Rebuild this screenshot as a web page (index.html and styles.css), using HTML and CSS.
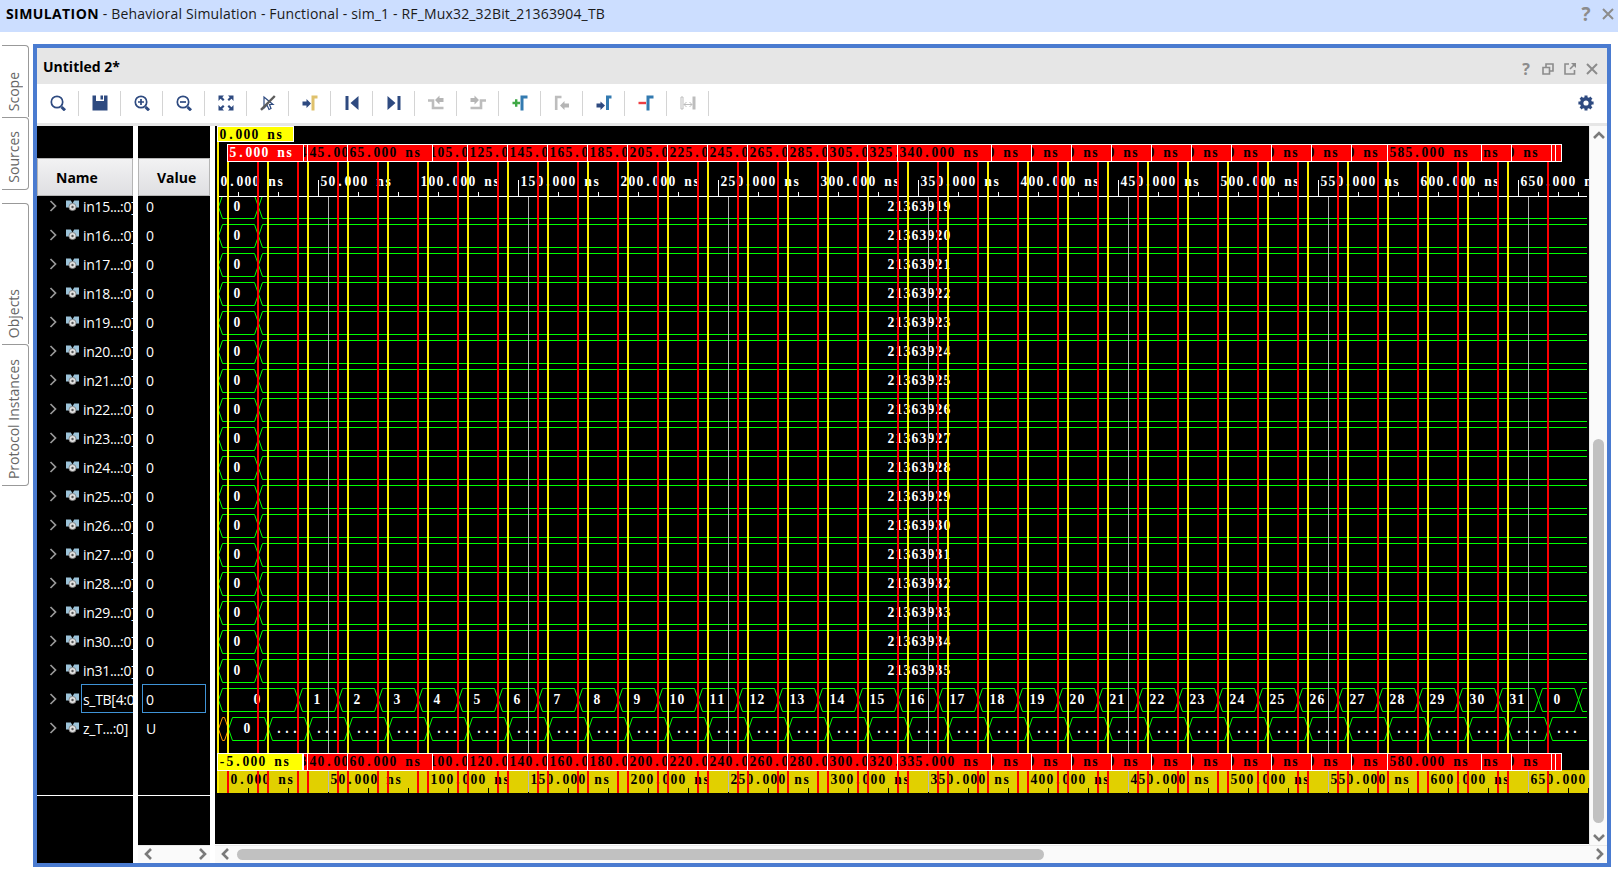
FILE: index.html
```html
<!DOCTYPE html>
<html lang="en">
<head>
<meta charset="utf-8">
<title>Behavioral Simulation</title>
<link rel="stylesheet" href="styles.css">
</head>
<body>
<header class="sim-bar">
  <div class="sim-title"><b>SIMULATION</b><span> - Behavioral Simulation - Functional - sim_1 - RF_Mux32_32Bit_21363904_TB</span></div>
  <div class="sim-actions">
    <span class="help">?</span>
    <svg width="12" height="12" viewBox="0 0 12 12"><path class="cross" d="M1 1L11 11M11 1L1 11"/></svg>
  </div>
</header>
<main class="workspace">
  <nav class="side">
    <div class="tab t1"><span>Scope</span></div>
    <div class="tab t2"><span>Sources</span></div>
    <div class="tab t3"><span>Objects</span></div>
    <div class="tab t4"><span>Protocol Instances</span></div>
  </nav>
  <section class="panel">
    <div class="panel-title">
      <b>Untitled 2*</b>
      <div class="panel-actions">
        <span class="help small">?</span>
        <svg width="12" height="12" viewBox="0 0 12 12"><path class="thin" d="M4 4V1H11V8H8M1 4.500H7.500V11H1Z"/></svg>
        <svg width="12" height="12" viewBox="0 0 12 12"><path class="thin" d="M5 1H1V11H10.500V7M6 6L10 2"/><path fill="#8c8c8c" d="M7 0H12V5Z"/></svg>
        <svg width="12" height="12" viewBox="0 0 12 12"><path class="cross" d="M1 1L11 11M11 1L1 11"/></svg>
      </div>
    </div>
    <div class="toolbar">
      <div class="tool"><svg viewBox="0 0 16 16"><circle class="ln" cx="7" cy="7" r="5.700"/><path class="ln thick" d="M11.500 12L15 15.300"/></svg></div>
      <div class="tool"><svg viewBox="0 0 16 16"><path class="fl" d="M0.500 0.500H4V6H12V0.500H15.500V15.500H0.500ZM8.500 0.500H11V4.500H8.500Z"/></svg></div>
      <div class="tool"><svg viewBox="0 0 16 16"><circle class="ln" cx="7" cy="7" r="5.700"/><path class="ln" d="M4 7H10M7 4V10"/><path class="ln thick" d="M11.500 12L15 15.300"/></svg></div>
      <div class="tool"><svg viewBox="0 0 16 16"><circle class="ln" cx="7" cy="7" r="5.700"/><path class="ln" d="M4 7H10"/><path class="ln thick" d="M11.500 12L15 15.300"/></svg></div>
      <div class="tool"><svg viewBox="0 0 16 16"><path class="fl" d="M0.500 0.500H6L4.300 2.200L6.500 4.500L5 6L2.500 3.800L0.500 6ZM15.500 0.500V6L13.500 3.800L11 6L9.500 4.500L11.700 2.200L10 0.500ZM0.500 15.500V10L2.500 12.200L5 10L6.500 11.500L4.300 13.800L6 15.500ZM15.500 15.500H10L11.700 13.800L9.500 11.500L11 10L13.500 12.200L15.500 10Z"/></svg></div>
      <div class="tool"><svg viewBox="0 0 16 16"><path class="ln fine" d="M4 2V13L7 10L9 14.500L11 13.500L9.500 9.500H13Z"/><path stroke="#5c5c5c" stroke-width="2.400" d="M1 14.800L14.800 1"/></svg></div>
      <div class="tool"><svg viewBox="0 0 16 16"><path class="fl" d="M0.500 6.500H4.500V4L9 8.500L4.500 13V10.500H0.500Z"/><path fill="none" stroke="#dfc16c" stroke-width="3" d="M11 15.500V2H15.500"/></svg></div>
      <div class="tool"><svg viewBox="0 0 16 16"><path class="fl" d="M1.500 1H4.500V15H1.500ZM14.500 1V15L6.500 8Z"/></svg></div>
      <div class="tool"><svg viewBox="0 0 16 16"><path class="fl" d="M11.500 1H14.500V15H11.500ZM1.500 1V15L9.500 8Z"/></svg></div>
      <div class="tool"><svg viewBox="0 0 16 16"><path class="gl" d="M0 5.500H5V13H15.500"/><path class="gf" d="M7 5L11.500 0.500V3H15.500V7H11.500V9.500Z"/></svg></div>
      <div class="tool"><svg viewBox="0 0 16 16"><path class="gl" d="M16 5.500H11V13H0.500"/><path class="gf" d="M9 5L4.500 0.500V3H0.500V7H4.500V9.500Z"/></svg></div>
      <div class="tool"><svg viewBox="0 0 16 16"><path stroke="#3fa845" stroke-width="2.400" d="M0.500 8H8M4.200 4.200V11.800"/><path class="bl" d="M10 15.500V2H15.500"/></svg></div>
      <div class="tool"><svg viewBox="0 0 16 16"><path class="gl" d="M2.200 15V2H7.500"/><path class="gf" d="M6 10.500L10.500 6V8.500H15V12.500H10.500V15Z"/></svg></div>
      <div class="tool"><svg viewBox="0 0 16 16"><path class="fl" d="M0.500 8.500H4.500V6.500L9 10.500L4.500 15V12.500H0.500Z"/><path class="bl" d="M11.500 15V2H15.500"/></svg></div>
      <div class="tool"><svg viewBox="0 0 16 16"><path stroke="#ee3e42" stroke-width="2.400" d="M0.500 8H8"/><path class="bl" d="M10 15.500V2H15.500"/></svg></div>
      <div class="tool"><svg viewBox="0 0 16 16"><path fill="none" stroke="#bdbdbd" d="M1 2H3V14H1ZM4 9.500H12M6.500 7L4 9.500L6.500 12M9.500 7L12 9.500L9.500 12"/><path stroke="#bdbdbd" stroke-width="3" d="M14 1.500V14.500"/></svg></div>
      <div class="gear"><svg viewBox="0 0 16 16"><circle cx="8" cy="8" r="4.300" fill="none" stroke="#2e4a80" stroke-width="3.400"/><path stroke="#2e4a80" stroke-width="3" d="M8 0.400V3M8 13V15.600M0.400 8H3M13 8H15.600M2.600 2.600L4.400 4.400M11.600 11.600L13.400 13.400M2.600 13.400L4.400 11.600M11.600 4.400L13.400 2.600"/></svg></div>
    </div>
    <div class="wave-area">
      <div class="col names">
        <div class="head">Name</div>
        <div class="rows" id="names"></div>
        <div class="tail"></div>
      </div>
      <div class="col values">
        <div class="head">Value</div>
        <div class="rows" id="values"></div>
        <div class="tail"></div>
        <div class="hbar">
          <svg width="8" height="12" viewBox="0 0 8 12"><path class="arr" d="M7 1L2 6L7 11"/></svg>
          <svg width="8" height="12" viewBox="0 0 8 12"><path class="arr" d="M1 1L6 6L1 11"/></svg>
        </div>
      </div>
      <div class="plot-wrap">
        <div class="plot-row">
          <svg id="plot" class="plot" width="1374" height="718" viewBox="215 126 1374 718"></svg>
          <div class="vbar">
            <svg width="12" height="8" viewBox="0 0 12 8"><path class="arr" d="M1 7L6 2L11 7"/></svg>
            <div class="vthumb"></div>
            <svg width="12" height="8" viewBox="0 0 12 8"><path class="arr" d="M1 1L6 6L11 1"/></svg>
          </div>
        </div>
        <div class="hbar wide">
          <svg width="8" height="12" viewBox="0 0 8 12"><path class="arr" d="M7 1L2 6L7 11"/></svg>
          <div class="hthumb"></div>
          <svg width="8" height="12" viewBox="0 0 8 12"><path class="arr" d="M1 1L6 6L1 11"/></svg>
        </div>
      </div>
    </div>
  </section>
</main>
<script src="wave.js"></script>
</body>
</html>
```
FILE: styles.css
```css
* { box-sizing: border-box; }
body {
  margin: 0;
  width: 1618px;
  height: 870px;
  overflow: hidden;
  background: #fff;
  color: #000;
  font-family: "Open Sans", "Noto Sans", sans-serif;
  font-size: 14px;
}
svg { display: block; flex: none; }
.sim-bar {
  height: 32px;
  background: #ccdeff;
  display: flex;
  justify-content: space-between;
  padding: 0 4px 4px 6px;
  align-items: center;
}
.sim-title { white-space: pre; line-height: 20px; }
.sim-title b { letter-spacing: 0.4px; }
.sim-title span { color: #1a1a1a; letter-spacing: 0.16px; }
.sim-actions, .panel-actions { display: flex; align-items: center; gap: 10px; }
.sim-actions { padding-bottom: 1px; }
.help { font-weight: 700; font-size: 19px; line-height: 18px; color: #8c8c8c; width: 12px; text-align: center; }
.help.small { font-size: 16px; }
.cross { fill: none; stroke: #8c8c8c; stroke-width: 2; }
.thin { fill: none; stroke: #8c8c8c; stroke-width: 1.6; }
.workspace { display: flex; padding-top: 12px; }
.side { width: 33px; padding: 1px 0 0 2px; }
.tab {
  width: 27px;
  border: 1px solid #999;
  border-left: 0;
  border-bottom: 0;
  border-radius: 0 4px 0 0;
  color: #666;
  writing-mode: vertical-rl;
  display: flex;
  align-items: center;
  justify-content: flex-end;
  padding: 0 3px 6px 0;
}
.tab span { transform: rotate(180deg); white-space: nowrap; line-height: 20px; }
.t1 { height: 72px; }
.t2 { height: 73px; border-bottom: 1px solid #999; border-radius: 0 4px 4px 0; }
.t3 { height: 141px; margin-top: 13px; }
.t4 { height: 142px; border-bottom: 1px solid #999; border-radius: 0 4px 4px 0; }
.panel { width: 1578px; height: 823px; border: 4px solid #4a7bd0; background: #fff; }
.panel-title {
  height: 36px;
  background: #e6e6e6;
  display: flex;
  justify-content: space-between;
  align-items: center;
  padding: 0 9px 0 6px;
}
.panel-actions { padding-top: 5px; }
.toolbar { height: 42px; border-bottom: 3px solid #e6e6e6; display: flex; align-items: center; }
.tool { width: 42px; height: 25px; border-right: 1px solid #d4d4d4; display: flex; align-items: center; justify-content: center; padding: 0 0 1px 0; }
.tool svg, .gear svg { width: 16px; height: 16px; }
.gear { margin-left: auto; padding: 0 13px 1px 0; }
.ln { fill: none; stroke: #2e4a80; stroke-width: 1.7; }
.ln.thick { stroke-width: 3; }
.ln.fine { stroke-width: 1.2; }
.fl { fill: #2e4a80; fill-rule: evenodd; }
.gl { fill: none; stroke: #bdbdbd; stroke-width: 2.6; }
.gf { fill: #b5b5b5; }
.bl { fill: none; stroke: #337ab0; stroke-width: 3; }
.wave-area { display: flex; height: 737px; gap: 5px; }
.col { display: flex; flex-direction: column; background: #000; padding-top: 32px; }
.names { width: 96px; }
.values { width: 72px; }
.head {
  height: 38px;
  flex: none;
  background: linear-gradient(#f2f2f3, #dfdfe2);
  border: 1px solid #b5b5b5;
  font-weight: 700;
  line-height: 38px;
}
.names .head { padding-left: 18px; }
.values .head { padding-left: 18px; }
.rows { height: 600px; flex: none; overflow: hidden; border-bottom: 1px solid #fff; color: #fff; }
.tail { flex: 1; }
.row { height: 29px; display: flex; align-items: center; white-space: nowrap; }
.row:first-child { margin-top: -5px; }
.names .row { padding-left: 12px; }
.row .chev { width: 8px; margin-right: 9px; }
.row .sig { width: 13px; margin-right: 2px; }
.row .label { height: 29px; line-height: 29px; border: 1px solid transparent; padding-left: 1px; flex: none; width: 70px; letter-spacing: -0.3px; }
.values .row .label { margin-left: 4px; width: 64px; padding-left: 3px; }
.row .label.sel { border-color: #3f93d6; }
.hbar {
  height: 18px;
  flex: none;
  background: #fafafa;
  border-top: 1px solid #e8e8e8;
  display: flex;
  align-items: center;
  justify-content: space-between;
  padding: 0 3px 1px 6px;
}
.arr { fill: none; stroke: #7a7a7a; stroke-width: 2.6; }
.plot-wrap { width: 1392px; display: flex; flex-direction: column; }
.plot-row { display: flex; height: 719px; }
.plot { background: #000; }
.vbar {
  width: 18px;
  background: #fafafa;
  border-left: 1px solid #e8e8e8;
  display: flex;
  flex-direction: column;
  align-items: center;
  padding: 5px 0 3px 0;
}
.vthumb { width: 11px; height: 384px; border-radius: 6px; background: #c1c1c1; margin-top: auto; margin-bottom: 11px; }
.hbar.wide { justify-content: flex-start; }
.hthumb { width: 807px; height: 11px; border-radius: 6px; background: #c1c1c1; margin: 0 auto 0 8px; }
.mono { font-family: "Liberation Serif", serif; font-weight: 700; font-size: 13.6px; white-space: pre; }
.bus { fill: none; stroke: #00ff00; stroke-width: 1; }
.bus.undef { stroke: #ff9a00; }
```
FILE: wave.js
```js
const NS = 'http://www.w3.org/2000/svg';
const plot = document.getElementById('plot');

function el(tag, attrs, parent = plot) {
  const n = document.createElementNS(NS, tag);
  for (const k in attrs) n.setAttribute(k, attrs[k]);
  parent.appendChild(n);
  return n;
}
function rect(x, y, width, height, fill, parent) {
  return el('rect', { x, y, width, height, fill }, parent);
}

// Every character sits centred in an 8px cell.
const ADV = { n: 7.6, s: 5.3, '.': 3.4, ' ': 3.4, '-': 4.5 };
function text(str, x, y, fill, parent) {
  const xs = [...str].map((c, i) => (x + i * 8 + (8 - (ADV[c] || 6.8)) / 2).toFixed(1));
  el('text', { x: xs.join(' '), y, fill, class: 'mono' }, parent).textContent = str;
}

function cell(x1, x2, top, opts = {}) {
  const t = top + 0.5, b = top + 23.5, m = top + 12;
  const d = Math.min(4, (x2 - x1) / 2);
  const a = x1 + 0.5, z = x2 + 0.5;
  const p = opts.open
    ? `M${x2} ${t}H${a + d}L${a} ${m}L${a + d} ${b}H${x2}`
    : `M${a} ${m}L${a + d} ${t}H${z - d}L${z} ${m}L${z - d} ${b}H${a + d}Z`;
  el('path', { d: p, class: 'bus' + (opts.undef ? ' undef' : '') }, opts.parent);
}
function centred(str, x1, x2, top, parent) {
  text(str, (x1 + x2) / 2 - 1 - 4 * str.length, top + 16, '#fff', parent);
}

// Signals
const signals = el('svg', { x: 215, y: 197, width: 1374, height: 556, viewBox: '215 197 1374 556' });
for (let i = 0; i < 17; i++) {
  const top = 195 + 29 * i;
  cell(218, 258, top, { parent: signals });
  cell(258, 1587, top, { open: true, parent: signals });
  centred('0', 218, 258, top, signals);
  text(String(21363919 + i), 887, top + 16, '#fff', signals);
}
cell(218, 298, 688);
centred('0', 218, 298, 688);
for (let i = 1; i <= 32; i++) {
  const x = 258 + 40 * i;
  cell(x, x + 40, 688);
  centred(String(i % 32), x, x + 40, 688);
}
cell(1578, 1587, 688, { open: true });
cell(218, 228, 717, { undef: true });
cell(228, 268, 717);
centred('0', 228, 268, 717);
for (let x = 268; x < 1540; x += 40) {
  cell(x, x + 40, 717);
  centred('...', x, x + 40, 717);
}
cell(1548, 1587, 717, { open: true });
centred('...', 1548, 1588, 717);

// Upper ruler
rect(218, 196, 1369, 1, '#fff');
for (let i = 0; 218 + 20 * i < 1587; i++) {
  const major = i % 5 === 0;
  rect(218 + 20 * i, major ? 180 : 192, 1, major ? 16 : 4, '#fff');
}
for (let i = 0; i < 14; i++) text((i * 50) + '.000 ns', 220 + 100 * i, 186, '#fff');

// Lower ruler
rect(217, 770, 1372, 23, '#e1d000');
for (let x = 228; x < 1589; x += 20) rect(x, 788, 1, 5, '#000');
for (let i = 0; i < 14; i++) text((i * 50) + '.000' + (i < 13 ? ' ns' : ''), 230 + 100 * i, 784, '#000');

// Grid lines and markers
for (let x = 328; x < 1587; x += 200) {
  rect(x, 197, 1, 556, '#b8b8b8');
  rect(x, 770, 1, 22, '#b8b8b8');
}
rect(217, 142, 2, 611, '#fff000');
rect(217, 770, 2, 23, '#fff000');
for (let x = 228; x <= 1508; x += 40) {
  rect(x - 1, 162, 2, 591, '#fff000');
  rect(x - 1, 770, 2, 23, '#ff0000');
}
for (const x of [...Array.from({ length: 32 }, (_, i) => 258 + 40 * i), 1548]) {
  rect(x - 1, 162, 2, 591, '#ff0000');
  rect(x - 1, 770, 2, 23, '#ff0000');
}

// Marker flags: left edge, right edge, text start, label.
// Only the characters that reach into the flag are drawn.
function flag(x1, x2, y, h, tx, label, bg, fg) {
  const s = el('svg', { x: x1, y, width: x2 - x1 + 1, height: h, viewBox: `${x1} ${y} ${x2 - x1 + 1} ${h}` });
  rect(x1, y, x2 - x1 + 1, h, '#fff', s);
  rect(x1 + 1, y + 1, x2 - x1 - 1, h - 2, bg, s);
  if (label) {
    const first = Math.max(0, Math.floor((x1 + 1 - tx) / 8));
    const last = Math.ceil((x2 - tx) / 8);
    const inner = el('svg', { x: x1 + 1, y, width: x2 - x1 - 1, height: h, viewBox: `${x1 + 1} ${y} ${x2 - x1 - 1} ${h}` }, s);
    text(label.slice(first, last), tx + 8 * first, y + 13, fg, inner);
  }
}
function flagRow(y, off) {
  const red = (a, b, t, v) => flag(a, b, y, 18, t, v === null ? '' : (v - off) + '.000 ns', '#ff0000', '#000');
  red(303, 307, 299, 40);
  red(307, 347, 309, 45);
  red(347, 432, 349, 65);
  red(432, 467, 429, 105);
  for (let i = 0; i < 9; i++) red(467 + 40 * i, 507 + 40 * i, 469 + 40 * i, 125 + 20 * i);
  red(827, 867, 829, 305);
  red(867, 897, 869, 325);
  red(897, 991, 899, 340);
  for (let i = 0; i < 10; i++) red(991 + 40 * i, i === 9 ? 1387 : 1031 + 40 * i, 939 + 40 * i, 360 + 20 * i);
  red(1387, 1481, 1389, 585);
  red(1481, 1511, 1419, 600);
  red(1511, 1551, 1459, 620);
  red(1551, 1555, 0, null);
  red(1555, 1561, 0, null);
}
flag(217, 293, 126, 16, 219, '0.000 ns', '#ffff00', '#000');
flagRow(144, 0);
flag(227, 303, 144, 18, 229, '5.000 ns', '#ff0000', '#fff');
flagRow(753, 5);
flag(217, 302, 753, 18, 218, '-5.000 ns', '#ffff00', '#000');

// Signal list
const names = [];
for (let i = 15; i < 32; i++) names.push(['in' + i + '...:0]', '0']);
names.push(['s_TB[4:0]', '0', true], ['z_T...:0]', 'U']);
const chev = '<svg class="chev" width="8" height="12" viewBox="0 0 8 12"><path d="M1.500 1L6.500 6L1.500 11" fill="none" stroke="#999" stroke-width="1.700"/></svg>';
const sig = '<svg class="sig" width="13" height="14" viewBox="0 0 13 14"><path fill="#9cc3d9" d="M0 1.500H4.800L6.500 4.500L8.200 1.500H13V8.500H0Z"/><circle cx="6.500" cy="8" r="3.600" fill="#e0e0e0" stroke="#777" stroke-width="0.800"/><circle cx="6.500" cy="8" r="1.200" fill="#555"/></svg>';
document.getElementById('names').innerHTML = names.map(([n, , s]) =>
  `<div class="row">${chev}${sig}<span class="label${s ? ' sel' : ''}">${n}</span></div>`).join('');
document.getElementById('values').innerHTML = names.map(([, v, s]) =>
  `<div class="row"><span class="label${s ? ' sel' : ''}">${v}</span></div>`).join('');
```
